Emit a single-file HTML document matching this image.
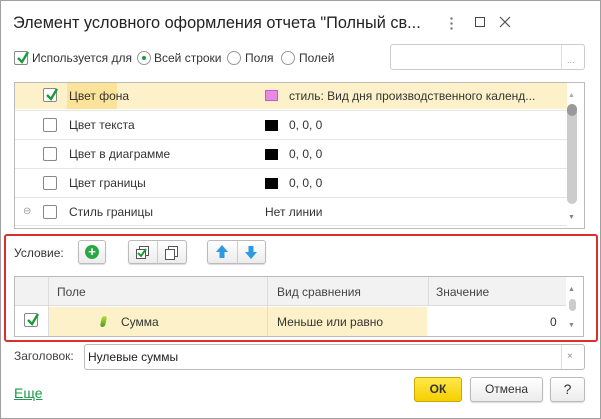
<!DOCTYPE html>
<html><head><meta charset="utf-8"><style>
*{box-sizing:border-box;margin:0;padding:0}
body{width:601px;height:419px;background:#fff;font-family:"Liberation Sans",sans-serif;font-size:12px;color:#333;position:relative;overflow:hidden}
.a{position:absolute}
.win{left:0;top:0;width:601px;height:419px;border:1px solid #a0a0a0}
.cb{width:14px;height:14px;border:1px solid #888;background:#fff;border-radius:2px}
.rad{width:14px;height:14px;border:1px solid #999;border-radius:50%;background:#fff}
.t{white-space:nowrap;line-height:16px}
.btn{border:1px solid #bbb;border-radius:3px;background:linear-gradient(#fff,#ececec);box-shadow:0 1px 1px rgba(0,0,0,.15)}
.sw{width:13px;height:11px}
.hl{background:#fcf1c8}
</style></head><body>
<div class="a win"></div>
<div class="a t" style="left:13px;top:12px;font-size:16.3px;color:#222;line-height:22px">Элемент условного оформления отчета "Полный св...</div>
<div class="a" style="left:450px;top:16px;width:3px;height:14px;background:radial-gradient(circle,#777 1.2px,transparent 1.3px) 0 0/3px 5px"></div>
<div class="a" style="left:475px;top:17px;width:10px;height:10px;border:1px solid #444"></div>
<svg class="a" style="left:499px;top:16px" width="12" height="12"><path d="M1 1 L11 11 M11 1 L1 11" stroke="#555" stroke-width="1.2"/></svg>

<div class="a cb" style="left:14px;top:51px"></div>
<svg class="a" style="left:15px;top:49px" width="16" height="16"><path d="M3 9 L7 13 L13 3" stroke="#1a9a3a" stroke-width="2.4" fill="none"/></svg>
<div class="a t" style="left:32px;top:50px">Используется для</div>
<div class="a rad" style="left:137px;top:51px"></div><div class="a" style="left:142px;top:56px;width:4px;height:4px;border-radius:50%;background:#1a9a3a"></div>
<div class="a t" style="left:154px;top:50px">Всей строки</div>
<div class="a rad" style="left:227px;top:51px"></div>
<div class="a t" style="left:245px;top:50px">Поля</div>
<div class="a rad" style="left:281px;top:51px"></div>
<div class="a t" style="left:299px;top:50px">Полей</div>
<div class="a" style="left:390px;top:44px;width:195px;height:26px;border:1px solid #ccc;border-radius:3px"></div>
<div class="a" style="left:561px;top:45px;width:1px;height:24px;background:#ddd"></div>
<div class="a t" style="left:567px;top:52px;font-size:9px;color:#999">...</div>

<div class="a" style="left:14px;top:82px;width:571px;height:147px;border:1px solid #bbb"></div>
<div class="a hl" style="left:15px;top:83px;width:552px;height:26px"></div>
<div class="a" style="left:67px;top:83px;width:50px;height:26px;background:#fbe39a"></div>
<div class="a" style="left:15px;top:110px;width:552px;height:1px;background:#e6e6e6"></div>
<div class="a" style="left:15px;top:139px;width:552px;height:1px;background:#e6e6e6"></div>
<div class="a" style="left:15px;top:168px;width:552px;height:1px;background:#e6e6e6"></div>
<div class="a" style="left:15px;top:197px;width:552px;height:1px;background:#e6e6e6"></div>
<div class="a" style="left:15px;top:225px;width:552px;height:1px;background:#e6e6e6"></div>
<div class="a" style="left:567px;top:104px;width:10px;height:100px;background:#ccc;border-radius:5px"></div>
<div class="a" style="left:567px;top:104px;width:10px;height:12px;background:#999;border-radius:5px"></div>
<div class="a t" style="left:568px;top:88px;font-size:7px;color:#aaa">▲</div>
<div class="a t" style="left:568px;top:210px;font-size:7px;color:#888">▼</div>

<div class="a cb" style="left:43px;top:88px"></div>
<svg class="a" style="left:44px;top:86px" width="16" height="16"><path d="M3 9 L7 13 L13 3" stroke="#1a9a3a" stroke-width="2.4" fill="none"/></svg>
<div class="a t" style="left:69px;top:88px">Цвет фона</div>
<div class="a sw" style="left:265px;top:90px;background:#e889e6;border:1px solid #c060c0"></div>
<div class="a t" style="left:289px;top:88px">стиль: Вид дня производственного календ...</div>

<div class="a cb" style="left:43px;top:118px"></div>
<div class="a t" style="left:69px;top:117px">Цвет текста</div>
<div class="a sw" style="left:265px;top:120px;background:#000"></div>
<div class="a t" style="left:289px;top:117px">0, 0, 0</div>

<div class="a cb" style="left:43px;top:147px"></div>
<div class="a t" style="left:69px;top:146px">Цвет в диаграмме</div>
<div class="a sw" style="left:265px;top:149px;background:#000"></div>
<div class="a t" style="left:289px;top:146px">0, 0, 0</div>

<div class="a cb" style="left:43px;top:176px"></div>
<div class="a t" style="left:69px;top:175px">Цвет границы</div>
<div class="a sw" style="left:265px;top:178px;background:#000"></div>
<div class="a t" style="left:289px;top:175px">0, 0, 0</div>

<div class="a t" style="left:23px;top:204px;font-size:10px;color:#999">⊖</div>
<div class="a cb" style="left:43px;top:205px"></div>
<div class="a t" style="left:69px;top:204px">Стиль границы</div>
<div class="a t" style="left:265px;top:204px">Нет линии</div>

<div class="a" style="left:4px;top:234px;width:594px;height:108px;border:2px solid #d9302a;border-radius:3px"></div>
<div class="a t" style="left:14px;top:245px">Условие:</div>
<div class="a btn" style="left:78px;top:240px;width:28px;height:24px"></div>
<div class="a" style="left:85px;top:245px;width:14px;height:14px;border-radius:50%;background:#2aa845;color:#fff;font-weight:bold;font-size:13px;line-height:14px;text-align:center">+</div>
<div class="a btn" style="left:128px;top:240px;width:59px;height:24px"></div>
<div class="a" style="left:157px;top:241px;width:1px;height:22px;background:#ccc"></div>
<div class="a" style="left:139px;top:246px;width:10px;height:10px;border:1px solid #555;background:#fff"></div>
<div class="a" style="left:136px;top:249px;width:10px;height:10px;border:1px solid #555;background:#fff"></div>
<svg class="a" style="left:136px;top:247px" width="12" height="12"><path d="M2 6 L5 9 L10 2" stroke="#1a9a3a" stroke-width="2" fill="none"/></svg>
<div class="a" style="left:168px;top:246px;width:10px;height:11px;border:1px solid #555;background:#fff"></div>
<div class="a" style="left:165px;top:249px;width:10px;height:11px;border:1px solid #555;background:#fff"></div>
<div class="a btn" style="left:207px;top:240px;width:59px;height:24px"></div>
<div class="a" style="left:237px;top:241px;width:1px;height:22px;background:#ccc"></div>
<svg class="a" style="left:215px;top:244px" width="14" height="16"><path d="M7 1 L13 8 H9.5 V14 H4.5 V8 H1 Z" fill="#2e9be0"/></svg>
<svg class="a" style="left:244px;top:244px" width="14" height="16"><path d="M7 15 L13 8 H9.5 V2 H4.5 V8 H1 Z" fill="#2e9be0"/></svg>

<div class="a" style="left:14px;top:276px;width:570px;height:61px;border:1px solid #bbb"></div>
<div class="a" style="left:15px;top:277px;width:551px;height:29px;background:#f2f2f2;border-bottom:1px solid #ddd"></div>
<div class="a" style="left:48px;top:277px;width:1px;height:59px;background:#ddd"></div>
<div class="a" style="left:267px;top:277px;width:1px;height:59px;background:#ddd"></div>
<div class="a" style="left:428px;top:277px;width:1px;height:29px;background:#ddd"></div>
<div class="a t" style="left:57px;top:284px;color:#444">Поле</div>
<div class="a t" style="left:277px;top:284px;color:#444">Вид сравнения</div>
<div class="a t" style="left:436px;top:284px;color:#444">Значение</div>
<div class="a hl" style="left:49px;top:307px;width:218px;height:29px"></div>
<div class="a hl" style="left:268px;top:307px;width:159px;height:29px"></div>
<div class="a cb" style="left:24px;top:313px"></div>
<svg class="a" style="left:25px;top:311px" width="16" height="16"><path d="M3 9 L7 13 L13 3" stroke="#1a9a3a" stroke-width="2.4" fill="none"/></svg>
<div class="a" style="left:101px;top:316px;width:5px;height:11px;border-radius:3px;background:linear-gradient(#b6e23a,#4a9a1a);transform:skewX(-12deg)"></div>
<div class="a t" style="left:121px;top:314px">Сумма</div>
<div class="a t" style="left:277px;top:314px">Меньше или равно</div>
<div class="a t" style="left:550px;top:314px">0</div>
<div class="a" style="left:569px;top:299px;width:7px;height:12px;background:#ccc;border-radius:4px"></div>
<div class="a t" style="left:568px;top:282px;font-size:7px;color:#888">▲</div>
<div class="a t" style="left:568px;top:318px;font-size:7px;color:#888">▼</div>

<div class="a t" style="left:14px;top:348px;color:#444">Заголовок:</div>
<div class="a" style="left:84px;top:344px;width:501px;height:26px;border:1px solid #bbb;border-radius:3px"></div>
<div class="a" style="left:561px;top:345px;width:1px;height:24px;background:#ddd"></div>
<div class="a t" style="left:88px;top:349px;color:#222">Нулевые суммы</div>
<div class="a t" style="left:567px;top:349px;font-size:10px;color:#888">×</div>

<div class="a t" style="left:14px;top:385px;font-size:14px;color:#1a9a4a;text-decoration:underline">Еще</div>
<div class="a" style="left:414px;top:377px;width:48px;height:25px;border:1px solid #c9a800;border-radius:3px;background:linear-gradient(#ffe84a,#f5cf00);text-align:center;font-weight:bold;line-height:23px;color:#333">ОК</div>
<div class="a btn" style="left:470px;top:377px;width:73px;height:25px;text-align:center;line-height:23px">Отмена</div>
<div class="a btn" style="left:550px;top:377px;width:35px;height:25px;text-align:center;line-height:23px;font-size:14px">?</div>
</body></html>
